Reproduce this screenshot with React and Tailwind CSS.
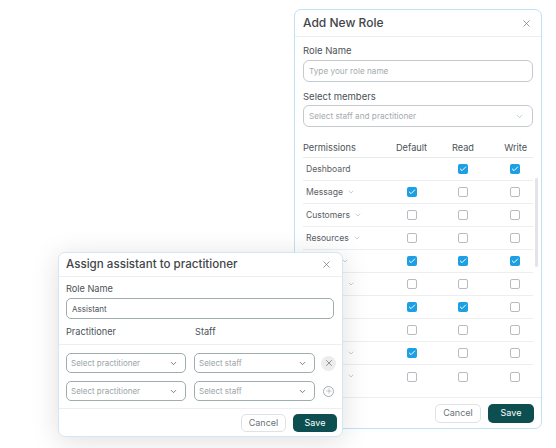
import React from "react";
import { X, ChevronDown, Check, Plus } from "lucide-react";

const font = { fontFamily: "Inter, 'Open Sans', sans-serif" };

const rows = [
  { name: "Deshboard", chevron: false, perms: [null, true, true] },
  { name: "Message", chevron: true, perms: [true, false, false] },
  { name: "Customers", chevron: true, perms: [false, false, false] },
  { name: "Resources", chevron: true, perms: [false, false, false] },
  { name: "Reports", chevron: true, perms: [true, true, true] },
  { name: "Message", chevron: true, perms: [false, false, false] },
  { name: "Settings", chevron: false, perms: [true, true, false] },
  { name: "Billing", chevron: false, perms: [false, false, false] },
  { name: "Message", chevron: true, perms: [true, false, false] },
  { name: "Message", chevron: true, perms: [false, false, false] },
];

function Box({ checked }) {
  if (checked === null) return <span className="w-[10px] h-[10px]" />;
  return checked ? (
    <span className="w-[10px] h-[10px] rounded-[2px] bg-[#1c9fe3] flex items-center justify-center">
      <Check size={8} strokeWidth={3} className="text-white" />
    </span>
  ) : (
    <span className="w-[10px] h-[10px] rounded-[2px] border border-[#b7bcc0] bg-white" />
  );
}

function Select({ label, width }) {
  return (
    <div className={`${width} shrink-0 h-[20px] border border-[#9fadae] rounded-[5px] flex items-center justify-between pl-[4px] pr-[7px]`}>
      <span className="text-[8px] text-[#9aa3a6]">{label}</span>
      <ChevronDown size={9} strokeWidth={2} className="text-[#4b5563]" />
    </div>
  );
}

export default function App() {
  return (
    <div className="relative w-[556px] h-[448px] bg-white overflow-hidden" style={font}>
      {/* Add New Role dialog */}
      <div className="absolute left-[294px] top-[9px] w-[248px] h-[420px] bg-white border border-[#bfe1f6] rounded-[7px] flex flex-col">
        <div className="h-[27px] shrink-0 flex items-center justify-between px-2 border-b border-[#eceef0]">
          <span className="text-[12px] font-medium text-[#3f4549]">Add New Role</span>
          <X size={11} strokeWidth={1.5} className="text-[#6b7176] mr-[1px]" />
        </div>
        <div className="px-2 flex flex-col">
          <div className="mt-[8px] h-[12px] flex items-center text-[9.5px] text-[#4b5257]">Role Name</div>
          <div className="mt-[3px] h-[22px] border border-[#c3cbcd] rounded-[6px] flex items-center px-[5px]">
            <span className="text-[8.2px] text-[#a4abae]">Type your role name</span>
          </div>
          <div className="mt-[9px] h-[12px] flex items-center text-[9.5px] text-[#4b5257]">Select members</div>
          <div className="mt-[2px] h-[22px] border border-[#c3cbcd] rounded-[6px] flex items-center justify-between pl-[5px] pr-[8px]">
            <span className="text-[8.2px] text-[#a4abae]">Select staff and practitioner</span>
            <ChevronDown size={9} strokeWidth={1.5} className="text-[#9aa1a5]" />
          </div>
        </div>
        <div className="relative px-2 mt-[11px]">
          <div className="h-[20px] grid grid-cols-[83px_51px_52px_1fr] items-center border-b border-[#e8eaec] text-[9.2px] text-[#4b5257]">
            <span>Permissions</span>
            <span className="text-center">Default</span>
            <span className="text-center">Read</span>
            <span className="text-right pr-[6px]">Write</span>
          </div>
          {rows.map((r, i) => (
            <div
              key={i}
              className={`h-[23px] grid grid-cols-[83px_51px_52px_1fr] items-center text-[8.6px] text-[#5a6166] ${
                i < rows.length - 1 ? "border-b border-[#eceef0]" : ""
              }`}
            >
              <span className="pl-[3px] flex items-center gap-[4px]">
                {r.name}
                {r.chevron && <ChevronDown size={8} strokeWidth={1.5} className="text-[#9aa1a5]" />}
              </span>
              <span className="flex justify-center">
                <Box checked={r.perms[0]} />
              </span>
              <span className="flex justify-center">
                <Box checked={r.perms[1]} />
              </span>
              <span className="flex justify-end pr-[13px]">
                <Box checked={r.perms[2]} />
              </span>
            </div>
          ))}
          <div className="absolute right-[3px] top-[40px] w-[3px] h-[89px] rounded-full bg-[#e2e4e6]" />
        </div>
        <div className="mt-auto h-[31px] border-t border-[#eceef0] flex items-center justify-end gap-[7px] px-[7px]">
          <button className="w-[46px] h-[19px] rounded-[5px] border border-[#dfe3e5] text-[9px] text-[#6b7176]">Cancel</button>
          <button className="w-[46px] h-[19px] rounded-[5px] bg-[#0d4f51] text-[9px] text-white">Save</button>
        </div>
      </div>

      {/* Assign assistant dialog */}
      <div className="absolute left-[58px] top-[252px] w-[285px] h-[185px] bg-white border border-[#cfe7f7] rounded-[7px] flex flex-col shadow-[0_4px_28px_rgba(0,0,0,0.13)]">
        <div className="h-[24px] shrink-0 flex items-center justify-between pl-[7px] pr-2 border-b border-[#eceef0]">
          <span className="text-[11.6px] font-medium text-[#3f4549]">Assign assistant to practitioner</span>
          <X size={11} strokeWidth={1.5} className="text-[#6b7176] mr-[2px]" />
        </div>
        <div className="pl-[7px] pr-2 flex flex-col">
          <div className="mt-[6px] h-[12px] flex items-center text-[9.2px] text-[#4b5257]">Role Name</div>
          <div className="mt-[3px] h-[21px] border border-[#9fadae] rounded-[5px] flex items-center px-[5px]">
            <span className="text-[8px] text-[#4b5257]">Assistant</span>
          </div>
          <div className="h-[25px] grid grid-cols-[129px_1fr] items-center text-[9.2px] text-[#4b5257]">
            <span>Practitioner</span>
            <span>Staff</span>
          </div>
        </div>
        <div className="border-t border-[#eceef0] pl-[7px] pr-[5px] pt-[8px] flex flex-col gap-[8px]">
          <div className="flex items-center gap-[8px]">
            <Select label="Select practitioner" width="w-[120px]" />
            <Select label="Select staff" width="w-[121px]" />
            <span className="ml-[-2px] w-[15px] h-[15px] rounded-full bg-[#ededee] flex items-center justify-center">
              <X size={10} strokeWidth={1.5} className="text-[#5a6166]" />
            </span>
          </div>
          <div className="flex items-center gap-[8px]">
            <Select label="Select practitioner" width="w-[120px]" />
            <Select label="Select staff" width="w-[121px]" />
            <span className="w-[11px] h-[11px] rounded-full border border-[#a7adb1] flex items-center justify-center">
              <Plus size={8} strokeWidth={1.5} className="text-[#8a9095]" />
            </span>
          </div>
        </div>
        <div className="mt-auto h-[28px] border-t border-[#eceef0] flex items-center justify-end gap-[7px] px-[5px]">
          <button className="w-[45px] h-[18px] rounded-[5px] border border-[#dfe3e5] text-[9px] text-[#6b7176]">Cancel</button>
          <button className="w-[44px] h-[18px] rounded-[5px] bg-[#0d4f51] text-[9px] text-white">Save</button>
        </div>
      </div>
    </div>
  );
}
